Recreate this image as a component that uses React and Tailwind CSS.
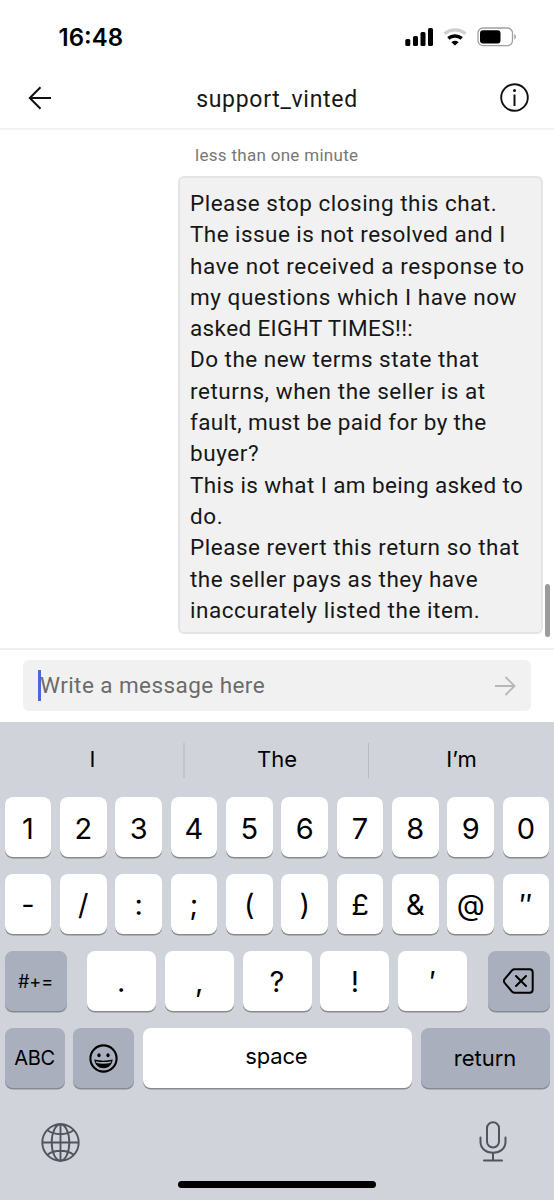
import clsx from 'clsx';

const message = [
  { text: 'Please stop closing this chat.', tracking: 'tracking-[0.48px]' },
  { text: 'The issue is not resolved and I', tracking: 'tracking-[0.44px]' },
  { text: 'have not received a response to', tracking: 'tracking-[0.6px]' },
  { text: 'my questions which I have now', tracking: 'tracking-[0.55px]' },
  { text: 'asked EIGHT TIMES!!:', tracking: 'tracking-[0.37px]' },
  { text: 'Do the new terms state that', tracking: 'tracking-[0.47px]' },
  { text: 'returns, when the seller is at', tracking: 'tracking-[0.55px]' },
  { text: 'fault, must be paid for by the', tracking: 'tracking-[0.38px]' },
  { text: 'buyer?', tracking: 'tracking-[0.6px]' },
  { text: 'This is what I am being asked to', tracking: 'tracking-[0.39px]' },
  { text: 'do.', tracking: 'tracking-[0.6px]' },
  { text: 'Please revert this return so that', tracking: 'tracking-[0.52px]' },
  { text: 'the seller pays as they have', tracking: 'tracking-[0.51px]' },
  { text: 'inaccurately listed the item.', tracking: 'tracking-[0.55px]' },
];

const digits = ['1', '2', '3', '4', '5', '6', '7', '8', '9', '0'];
const symbols = ['-', '/', ':', ';', '(', ')', '£', '&', '@', '″'];
const punctuation = ['.', ',', '?', '!', '′'];

function Key({ children, dark, className }) {
  return (
    <button
      className={clsx(
        'flex h-[60px] items-center justify-center rounded-[8px] text-black shadow-[0_1.5px_0_#898a8d]',
        dark ? 'bg-[#a9afbc]' : 'bg-white',
        className
      )}
    >
      {children}
    </button>
  );
}

function StatusBar() {
  return (
    <div className="flex h-[66px] items-center justify-between pt-[8px] pr-[37px] pl-[58.5px]">
      <span className="pt-[1px] text-[24px] leading-[30px] font-semibold text-black">16:48</span>
      <div className="flex items-center">
        <svg width="29" height="18" viewBox="0 0 29 18">
          <rect x="0.3" y="11" width="5" height="7" rx="1.5" />
          <rect x="8" y="8" width="5" height="10" rx="1.5" />
          <rect x="15.5" y="4" width="5" height="14" rx="1.5" />
          <rect x="23" y="0" width="5" height="18" rx="1.5" />
        </svg>
        <svg className="ml-[9px]" width="25" height="18" viewBox="0 0 25 18" fill="none">
          <path d="M1.5 5.8a16 16 0 0 1 21 0" stroke="#cfcfcf" strokeWidth="3.2" />
          <path d="M5.3 10.4a10.4 10.4 0 0 1 13.4 0" stroke="#000" strokeWidth="3.4" />
          <path d="M8.4 14.2q3.6-2.8 7.2 0L12 17.6z" fill="#000" />
        </svg>
        <svg className="ml-[9px]" width="40" height="20" viewBox="0 0 40 20" fill="none">
          <rect x="1" y="1" width="34.5" height="17.6" rx="5" stroke="#a0a0a0" strokeWidth="1.3" />
          <rect x="3" y="3.2" width="20.5" height="13.2" rx="3" fill="#000" />
          <path d="M37.3 7v5.6q1.7-.8 1.7-2.8T37.3 7z" fill="#a0a0a0" />
        </svg>
      </div>
    </div>
  );
}

function Header() {
  return (
    <header className="flex h-[64px] items-center justify-between border-b-2 border-[#f2f2f2] pr-[25px] pl-[28px] font-['Roboto',sans-serif]">
      <svg className="mt-[1px]" width="24" height="24" viewBox="0 0 24 24" fill="none" stroke="#111" strokeWidth="2">
        <path d="M23 12H2M12.5 1.3 1.8 12l10.7 10.7" />
      </svg>
      <h1 className="pt-[6px] pl-[2px] text-[23px] tracking-[0.7px] text-[#171717]">support_vinted</h1>
      <svg className="mt-[1px]" width="29" height="29" viewBox="0 0 29 29" fill="none">
        <circle cx="14.5" cy="14.5" r="13.3" stroke="#111" strokeWidth="1.9" />
        <path d="M14.5 11.5V23" stroke="#111" strokeWidth="2" />
        <circle cx="14.5" cy="7.5" r="1.5" fill="#111" />
      </svg>
    </header>
  );
}

function Chat() {
  return (
    <main className="flex h-[518px] justify-end font-['Roboto',sans-serif]">
      <div className="w-[365px] shrink-0">
        <p className="mt-[13px] pl-[17px] text-[17px] leading-6 tracking-[0.3px] text-[#777]">less than one minute</p>
        <div className="mt-[9px] h-[458px] rounded-[6px] border-2 border-[#e4e4e4] bg-[#f1f1f1] pt-[10px] pl-[10px] text-[22.5px] leading-[31.3px] text-[#171717]">
          {message.map((line) => (
            <div key={line.text} className={clsx('whitespace-nowrap', line.tracking)}>
              {line.text}
            </div>
          ))}
        </div>
      </div>
      <div className="mt-[454px] mr-[4px] ml-[2px] h-[53px] w-[5px] rounded-full bg-[#9b9b9b]" />
    </main>
  );
}

function Composer() {
  return (
    <div className="h-[74px] border-t-2 border-[#efefef] px-[23px] pt-[10px] font-['Roboto',sans-serif]">
      <div className="flex h-[51px] items-center rounded-[6px] bg-[#f1f1f1] pr-[15px] pl-[15px]">
        <div className="h-[31px] w-[3px] bg-[#4668e0]" />
        <span className="-ml-[1px] flex-1 text-[22.5px] tracking-[0.43px] text-[#6b6b6b]">Write a message here</span>
        <svg width="21" height="20" viewBox="0 0 21 20" fill="none" stroke="#b7b7b7" strokeWidth="1.9">
          <path d="M0 10h19.5M10.5 1l9 9-9 9" />
        </svg>
      </div>
    </div>
  );
}

function EmojiIcon() {
  return (
    <svg width="29" height="29" viewBox="0 0 29 29" fill="none">
      <circle cx="14.5" cy="14.5" r="13.1" stroke="#000" strokeWidth="2.1" />
      <ellipse cx="10" cy="11.3" rx="1.6" ry="2" fill="#000" />
      <ellipse cx="19" cy="11.3" rx="1.6" ry="2" fill="#000" />
      <path d="M5.3 15.6q9.2 2.3 18.4 0c-.7 5.6-4.4 8.7-9.2 8.7S6 21.2 5.3 15.6z" fill="#000" />
      <path d="M6.8 17.2q7.7 1.7 15.4 0l-.7 1.7q-7 1.5-14 0z" fill="#a9afbc" />
    </svg>
  );
}

function BackspaceIcon() {
  return (
    <svg width="31" height="26" viewBox="0 0 31 26" fill="none" stroke="#000" strokeWidth="2" strokeLinecap="round" strokeLinejoin="round">
      <path d="M11.5 1.2H26.5q3.2 0 3.2 3.2v17.2q0 3.2-3.2 3.2H11.5q-1.3 0-2.3-1L1.6 14.8q-1.5-1.8 0-3.6L9.2 2.2q1-1 2.3-1z" />
      <path d="m13 8 10 10M23 8 13 18" />
    </svg>
  );
}

function GlobeIcon() {
  return (
    <svg width="39" height="39" viewBox="0 0 39 39" fill="none" stroke="#50545d" strokeWidth="1.9">
      <circle cx="19.5" cy="19.5" r="18.2" />
      <ellipse cx="19.5" cy="19.5" rx="8.8" ry="18.2" />
      <path d="M19.5 1.3v36.4M1.3 19.5h36.4M6.5 7.3q5.3 3.9 13 3.9t13-3.9M6.5 31.7q5.3-3.9 13-3.9t13 3.9" />
    </svg>
  );
}

function MicIcon() {
  return (
    <svg width="28" height="41" viewBox="0 0 28 41" fill="none" stroke="#50545d" strokeWidth="2" strokeLinecap="round">
      <rect x="8" y="1.2" width="12" height="25.3" rx="6" />
      <path d="M1.5 16.5v4.3c0 6.5 5.3 11 12.5 11s12.5-4.5 12.5-11v-4.3M14 32v7.5M5 39.5h18" />
    </svg>
  );
}

function Keyboard() {
  return (
    <section className="h-[478px] bg-[#d0d3da]">
      <div className="flex h-[75px] items-center pt-[1px] text-center text-[22px] text-black">
        <div className="w-[183px] pb-[2px] pl-[2px]">I</div>
        <div className="h-[35px] w-[2px] bg-[#c0c3ca]" />
        <div className="flex-1 pb-[2px] pl-[1px]">The</div>
        <div className="h-[35px] w-[1px] bg-[#b8bbc2]" />
        <div className="w-[185px] pb-[2px]">I’m</div>
      </div>

      <div className="flex flex-col gap-[17px] px-[4.5px] text-[29px]">
        <div className="grid grid-cols-10 gap-[8.4px]">
          {digits.map((d) => (
            <Key key={d} className="pt-[3px]">{d}</Key>
          ))}
        </div>
        <div className="grid grid-cols-10 gap-[8.4px]">
          {symbols.map((s) => (
            <Key key={s} className="pt-[2px]">{s}</Key>
          ))}
        </div>
        <div className="flex justify-between">
          <Key dark className="w-[62px] text-[18px]">#+=</Key>
          <div className="flex gap-[8.9px]">
            {punctuation.map((p) => (
              <Key key={p} className="w-[69px] pt-[2px]">{p}</Key>
            ))}
          </div>
          <Key dark className="w-[62px]">
            <BackspaceIcon />
          </Key>
        </div>
        <div className="flex gap-[8.7px] text-[22px]">
          <Key dark className="w-[60px] text-[20px] tracking-[-0.3px]">ABC</Key>
          <Key dark className="w-[61px]">
            <EmojiIcon />
          </Key>
          <Key className="w-[269px] pr-[2px] pb-[3px] tracking-[-0.2px]">space</Key>
          <Key dark className="flex-1">return</Key>
        </div>
      </div>

      <div className="flex items-start justify-between pt-[33px] pr-[47px] pl-[41px]">
        <div className="pt-[2px]">
          <GlobeIcon />
        </div>
        <MicIcon />
      </div>
      <div className="mx-auto mt-[19px] h-[7px] w-[198px] rounded-full bg-black" />
    </section>
  );
}

export default function App() {
  return (
    <div className="h-[1200px] w-[554px] overflow-hidden bg-white font-['Inter',sans-serif]">
      <StatusBar />
      <Header />
      <Chat />
      <Composer />
      <Keyboard />
    </div>
  );
}
